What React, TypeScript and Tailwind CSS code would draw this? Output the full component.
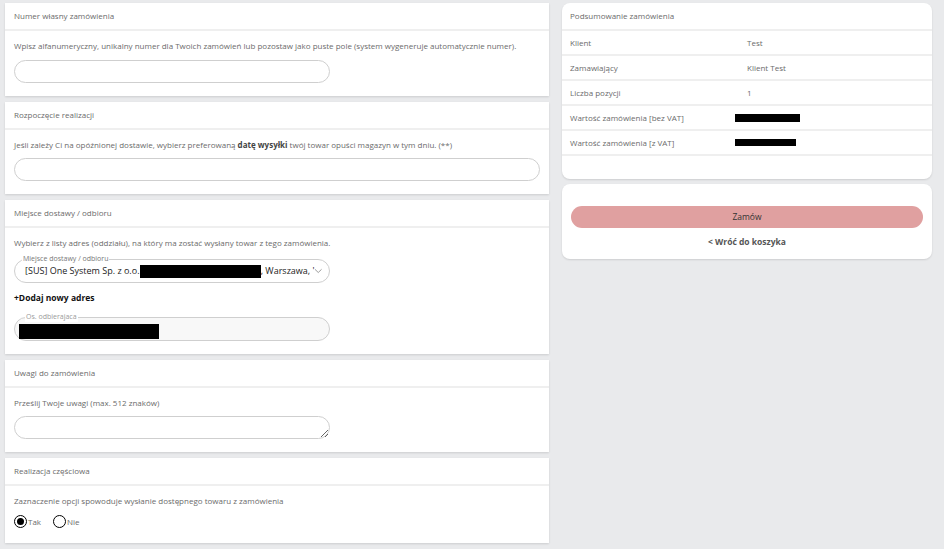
import React from "react";

const Card = ({ title, children, last }: { title: string; children: React.ReactNode; last?: boolean }) => {
  return (
    <div className="bg-white shadow-[0_1px_2px_rgba(0,0,0,0.12)]">
      <div className="h-[28px] flex items-center px-[9px] border-b-2 border-[#efefef] text-[#6b6b6b]">{title}</div>
      <div className={last ? "px-[9px] pt-[9px] pb-[15px]" : "px-[9px] pt-[9px] pb-[13px]"}>{children}</div>
    </div>
  );
};

const SummaryRow = ({ label, value }: { label: string; value: React.ReactNode }) => (
  <div className="h-[25px] flex items-center px-[8px] border-b-2 border-[#efefef]">
    <div className="w-[177px]">{label}</div>
    <div>{value}</div>
  </div>
);

export default function App() {
  return (
    <div
      className="min-h-[549px] bg-[#e9eaec] flex items-start pl-[5px] pt-[3px] text-[8px] leading-[12px] text-[#6b6b6b]"
      style={{ fontFamily: '"Open Sans", "Noto Sans", sans-serif' }}
    >
      {/* Left column */}
      <div className="w-[544px] flex flex-col gap-[6px]">
        <Card title="Numer własny zamówienia">
          <p>Wpisz alfanumeryczny, unikalny numer dla Twoich zamówień lub pozostaw jako puste pole (system wygeneruje automatycznie numer).</p>
          <input className="mt-[8px] block w-[316px] h-[23px] rounded-full border border-[#cfcfcf] outline-none" />
        </Card>

        <Card title="Rozpoczęcie realizacji">
          <p>
            Jeśli zależy Ci na opóźnionej dostawie, wybierz preferowaną <b className="text-[#444]">datę wysyłki</b> twój towar opuści magazyn w tym dniu. (**)
          </p>
          <input className="mt-[7px] block w-[526px] h-[23px] rounded-full border border-[#cfcfcf] outline-none" />
        </Card>

        <Card title="Miejsce dostawy / odbioru">
          <p>Wybierz z listy adres (oddziału), na który ma zostać wysłany towar z tego zamówienia.</p>
          <div className="relative mt-[10px] w-[316px] h-[24px] rounded-full border border-[#cfcfcf] flex items-center pl-[10px] pr-[6px]">
            <span className="absolute -top-[6px] left-[7px] bg-white px-[1px] text-[7px] leading-[10px] text-[#777]">Miejsce dostawy / odbioru</span>
            <span className="text-[9px] text-[#222] whitespace-nowrap">[SUS] One System Sp. z o.o.</span>
            <span className="inline-block w-[128px] h-[13px] bg-black" />
            <span className="text-[9px] text-[#222] whitespace-nowrap">, Warszawa, '</span>
            <svg className="ml-auto" width="9" height="6" viewBox="0 0 9 6" fill="none">
              <path d="M1 1.2 L4.5 4.6 L8 1.2" stroke="#8a8a8a" strokeWidth="0.9" />
            </svg>
          </div>
          <div className="mt-[9px] text-[8.5px] font-bold text-[#111]">+Dodaj nowy adres</div>
          <div className="relative mt-[13px] w-[316px] h-[24px] rounded-full border border-[#cfcfcf] bg-[#f8f8f8] flex items-center pl-[4px]">
            <span className="absolute -top-[6px] left-[10px] bg-white px-[1px] text-[7px] leading-[10px] text-[#9a9a9a]">Os. odbierajaca</span>
            <span className="inline-block w-[140px] h-[15px] bg-black mt-[4px]" />
          </div>
        </Card>

        <Card title="Uwagi do zamówienia">
          <p>Prześlij Twoje uwagi (max. 512 znaków)</p>
          <textarea className="mt-[7px] block w-[316px] h-[23px] rounded-[12px] border border-[#cfcfcf] outline-none resize" />
        </Card>

        <Card title="Realizacja częściowa" last>
          <p>Zaznaczenie opcji spowoduje wysłanie dostępnego towaru z zamówienia</p>
          <div className="mt-[8px] flex items-center gap-[12px]">
            <label className="flex items-center gap-[1px]">
              <span className="w-[13px] h-[13px] rounded-full border-[1.5px] border-black flex items-center justify-center">
                <span className="w-[7px] h-[7px] rounded-full bg-black" />
              </span>
              <span>Tak</span>
            </label>
            <label className="flex items-center gap-[1px]">
              <span className="w-[13px] h-[13px] rounded-full border-[1.5px] border-black" />
              <span>Nie</span>
            </label>
          </div>
        </Card>
      </div>

      {/* Right column */}
      <div className="ml-[13px] w-[370px] flex flex-col gap-[5px]">
        <div className="bg-white rounded-[8px] shadow-[0_1px_2px_rgba(0,0,0,0.12)] pb-[23px]">
          <div className="h-[28px] flex items-center px-[8px] border-b-2 border-[#efefef]">Podsumowanie zamówienia</div>
          <SummaryRow label="Klient" value="Test" />
          <SummaryRow label="Zamawiający" value="Klient Test" />
          <SummaryRow label="Liczba pozycji" value="1" />
          <SummaryRow label="Wartość zamówienia [bez VAT]" value={<span className="block -ml-[12px] w-[65px] h-[8px] bg-black" />} />
          <SummaryRow label="Wartość zamówienia [z VAT]" value={<span className="block -ml-[12px] w-[61px] h-[7px] bg-black" />} />
        </div>

        <div className="bg-white rounded-[8px] shadow-[0_1px_2px_rgba(0,0,0,0.12)] px-[9px] pt-[22px] pb-[11px] flex flex-col items-center">
          <button className="w-full h-[22px] rounded-full bg-[#e0a0a0] text-[#333] text-[8.5px]">Zamów</button>
          <a className="mt-[8px] text-[8.5px] font-bold text-[#555]">&lt; Wróć do koszyka</a>
        </div>
      </div>
    </div>
  );
}
